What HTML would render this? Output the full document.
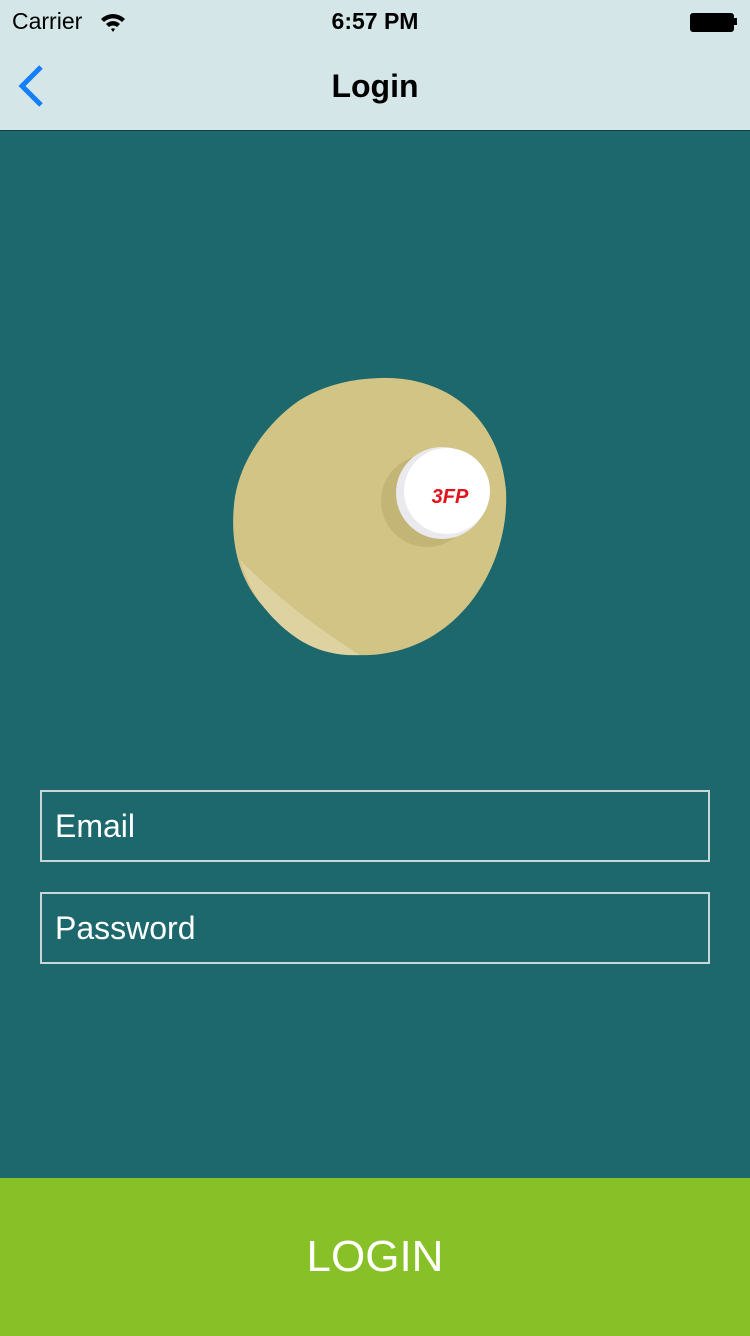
<!DOCTYPE html>
<html><head><meta charset="utf-8"><style>
body{margin:0;width:750px;height:1336px;background:#1d686c;font-family:"Liberation Sans",sans-serif;position:relative;overflow:hidden}
.nav{position:absolute;left:0;top:0;width:750px;height:130px;background:#d4e6e7;border-bottom:1px solid #0f3f42}
.field{position:absolute;left:40px;width:653px;height:68px;border:2px solid #c8d6d6;color:#fff;font-size:32px;line-height:68px;padding-left:13px;box-sizing:content-box}
.btn{position:absolute;left:0;top:1178px;width:750px;height:158px;background:#87c127;color:#fff;font-size:44px;text-align:center;line-height:158px}
</style></head><body>
<div class="nav">
<div style="position:absolute;left:12px;top:8px;font-size:23px;color:#000">Carrier</div>
<svg style="position:absolute;left:99px;top:12px" width="28" height="20" viewBox="0 0 28 20"><path d="M2 7 A17 17 0 0 1 26 7 L23 10 A13 13 0 0 0 5 10Z M7 12 A10 10 0 0 1 21 12 L18 15 A6 6 0 0 0 10 15Z M12 17 A3 3 0 0 1 16 17 L14 20Z" fill="#000"/></svg>
<div style="position:absolute;left:0;width:750px;top:8px;text-align:center;font-size:23px;font-weight:bold;color:#000">6:57 PM</div>
<div style="position:absolute;left:690px;top:13px;width:42px;height:17px;border:1px solid #000;border-radius:3px;background:#000"></div>
<div style="position:absolute;left:734px;top:18px;width:3px;height:7px;background:#000"></div>
<svg style="position:absolute;left:14px;top:64px" width="32" height="44" viewBox="0 0 32 44"><path d="M27 3 L8 22 L27 41" fill="none" stroke="#157efb" stroke-width="5"/></svg>
<div style="position:absolute;left:0;width:750px;top:68px;text-align:center;font-size:32px;font-weight:bold;color:#000">Login</div>
</div>
<svg style="position:absolute;left:0;top:0" width="750" height="700">
<path d="M380 378 C450 376 500 420 506 490 C510 565 460 650 370 655 C320 657 290 640 262 605 C240 580 230 545 234 505 C238 460 270 420 300 400 C325 385 350 379 380 378Z" fill="#d1c485"/>
<path d="M240 560 C250 590 258 600 262 605 C290 640 320 657 360 655 C320 630 280 600 240 560Z" fill="#ddd2a0"/>
<circle cx="427" cy="501" r="46" fill="#c2b576"/>
<circle cx="442" cy="493" r="46" fill="#e9e9ee"/>
<circle cx="447" cy="491" r="43" fill="#fff"/>
<text x="450" y="503" font-family="Liberation Sans" font-style="italic" font-weight="bold" font-size="20" fill="#e0141c" text-anchor="middle">3FP</text>
</svg>
<div class="field" style="top:790px">Email</div>
<div class="field" style="top:892px">Password</div>
<div class="btn">LOGIN</div>
</body></html>
